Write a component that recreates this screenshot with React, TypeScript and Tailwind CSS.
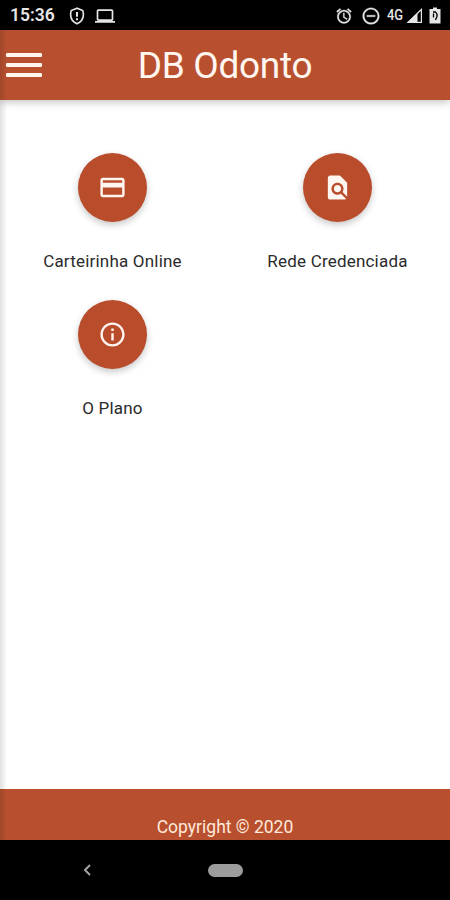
import React from "react";

const ICONS = {
  card: "M20 4H4c-1.11 0-1.99.89-1.99 2L2 18c0 1.11.89 2 2 2h16c1.11 0 2-.89 2-2V6c0-1.11-.89-2-2-2zm0 14H4v-6h16v6zm0-10H4V6h16v2z",
  find: "M20 19.59V8l-6-6H6c-1.1 0-1.99.9-1.99 2L4 20c0 1.1.89 2 1.99 2H18c.45 0 .85-.15 1.19-.4l-4.43-4.43c-.8.52-1.74.83-2.76.83-2.76 0-5-2.24-5-5s2.24-5 5-5 5 2.24 5 5c0 1.02-.31 1.96-.83 2.75L20 19.59zM9 13c0 1.66 1.34 3 3 3s3-1.34 3-3-1.34-3-3-3-3 1.34-3 3z",
  info: "M11 17h2v-6h-2v6zm1-15C6.48 2 2 6.48 2 12s4.48 10 10 10 10-4.48 10-10S17.52 2 12 2zm0 18c-4.41 0-8-3.59-8-8s3.59-8 8-8 8 3.59 8 8-3.59 8-8 8zM11 9h2V7h-2v2z",
  laptop: "M20 18c1.1 0 1.99-.9 1.99-2L22 6c0-1.1-.9-2-2-2H4c-1.1 0-2 .9-2 2v10c0 1.1.9 2 2 2H0v2h24v-2h-4zM4 6h16v10H4V6z",
  alarm: "M22 5.72l-4.6-3.86-1.29 1.53 4.6 3.86L22 5.72zM7.88 3.39L6.6 1.86 2 5.71l1.29 1.53 4.59-3.85zM12.5 8H11v6l4.75 2.85.75-1.23-4-2.37V8zM12 4c-4.97 0-9 4.03-9 9s4.02 9 9 9c4.97 0 9-4.03 9-9s-4.03-9-9-9zm0 16c-3.87 0-7-3.13-7-7s3.13-7 7-7 7 3.13 7 7-3.13 7-7 7z",
  dnd: "M7 11v2h10v-2H7zm5-9C6.48 2 2 6.48 2 12s4.48 10 10 10 10-4.48 10-10S17.52 2 12 2zm0 18c-4.41 0-8-3.59-8-8s3.59-8 8-8 8 3.59 8 8-3.59 8-8 8z",
};

const Icon = ({ d, className }: { d: string; className?: string }) => (
  <svg viewBox="0 0 24 24" fill="currentColor" className={className}>
    <path d={d} />
  </svg>
);

const StatusBar = () => (
  <div className="flex h-[30px] shrink-0 items-center bg-black pl-[10px] pr-[9px] pt-px text-[#e6e6e6]">
    <span className="w-[45px] whitespace-nowrap pt-px text-[17.5px] font-semibold leading-none">15:36</span>
    <svg viewBox="0 0 16 18" fill="none" stroke="currentColor" strokeWidth="1.6" className="ml-[14px] h-[18px] w-4">
      <path d="M8 1.2 2.2 3.6C.9 8.5.9 13.6 8 16.8 15.1 13.6 15.1 8.5 13.8 3.6Z" />
      <path d="M8 5v4.8M8 11.3v2" strokeWidth="2" />
    </svg>
    <Icon d={ICONS.laptop} className="ml-[10px] h-5 w-5" />
    <div className="ml-auto flex items-center">
      <Icon d={ICONS.alarm} className="h-[18px] w-[18px] stroke-current stroke-[0.4]" />
      <Icon d={ICONS.dnd} className="ml-[8px] h-5 w-5 stroke-current stroke-[0.3]" />
      <span className="ml-[6px] w-[19px] origin-left scale-x-[0.86] whitespace-nowrap text-[15px] font-medium leading-none">
        4G
      </span>
      <svg viewBox="0 0 17 16" className="h-4 w-[17px]">
        <path d="M15.400 1.500v12.900H2Z" fill="none" stroke="currentColor" strokeWidth="1.200" />
        <path d="M11.500 4.800V15H1Z" fill="currentColor" />
      </svg>
      <svg viewBox="0 0 12 17" className="ml-[6px] h-[17px] w-3">
        <path d="M4 .5h4V2h3.500v14.500H.5V2H4Z" fill="currentColor" />
        <path d="M4 5h2.500Q8.500 6.500 8 9.500L6.500 13M4.500 6.500v4" fill="none" stroke="#000" strokeWidth="1.300" />
      </svg>
    </div>
  </div>
);

const items = [
  { label: "Carteirinha Online", icon: ICONS.card },
  { label: "Rede Credenciada", icon: ICONS.find },
  { label: "O Plano", icon: ICONS.info },
];

export default function App() {
  return (
    <div className="flex h-[900px] w-[450px] flex-col overflow-hidden bg-white font-['Roboto',sans-serif]">
      <StatusBar />
      <div className="relative flex min-h-0 flex-1 flex-col">
        <header className="z-10 flex h-[70px] shrink-0 items-center bg-[#b85030] shadow-[0_2px_8px_rgba(0,0,0,0.25)]">
          <button aria-label="Menu" className="ml-[6px] flex w-9 flex-col gap-[6px]">
            <span className="h-1 rounded-[1px] bg-[#fff6f0]" />
            <span className="h-1 rounded-[1px] bg-[#fff6f0]" />
            <span className="h-1 rounded-[1px] bg-[#fff6f0]" />
          </button>
          <h1 className="mr-[42px] flex-1 text-center text-[37px] leading-none tracking-[-0.3px] text-[#fff6f0]">
            DB Odonto
          </h1>
        </header>

        <main className="grid flex-1 auto-rows-[147px] grid-cols-2 pt-[53px]">
          {items.map((item) => (
            <div key={item.label} className="flex flex-col items-center">
              <button
                aria-label={item.label}
                className="flex h-[69px] w-[69px] items-center justify-center rounded-full bg-[#b94c2b] text-[#fff6f2] shadow-[0_3px_7px_rgba(0,0,0,0.22)]"
              >
                <Icon d={item.icon} className="h-[29px] w-[29px]" />
              </button>
              <span className="mt-[29px] whitespace-nowrap text-[17px] leading-5 tracking-[0.2px] text-[#2b2b2b]">
                {item.label}
              </span>
            </div>
          ))}
        </main>

        <footer className="h-[51px] shrink-0 bg-[#b85030] pt-7 text-center text-[17.5px] leading-5 text-[#ffe9da]">
          Copyright © 2020
        </footer>
        <div className="pointer-events-none absolute inset-y-0 left-0 z-20 w-[7px] bg-gradient-to-r from-black/12 to-transparent" />
      </div>

      <nav className="grid h-[60px] shrink-0 grid-cols-[200px_50px_200px] items-center justify-items-center bg-black">
        <svg viewBox="0 0 8 12" fill="none" stroke="#a3a3a3" strokeWidth="2" className="mr-[26px] h-3 w-2">
          <path d="M7 1 2 6l5 5" />
        </svg>
        <span className="h-[13px] w-[35px] rounded-full bg-[#9c9c9c]" />
      </nav>
    </div>
  );
}
